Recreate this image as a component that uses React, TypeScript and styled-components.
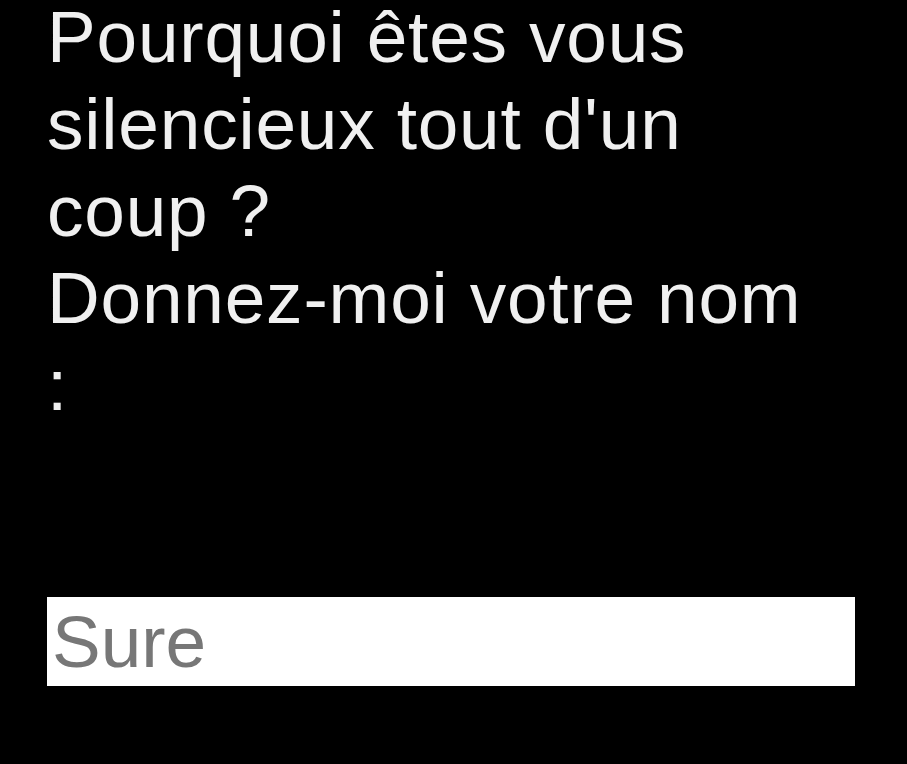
import React from "react";
import styled, { createGlobalStyle } from "styled-components";

const GlobalStyle = createGlobalStyle`
  html, body {
    margin: 0;
    padding: 0;
    background: #000000;
    overflow: hidden;
  }
  body {
    font-family: "Liberation Sans", Arial, sans-serif;
  }
`;

const Screen = styled.main`
  width: 907px;
  height: 764px;
  box-sizing: border-box;
  background: #000000;
  padding: 0 52px 0 47px;
  display: flex;
  flex-direction: column;
  overflow: hidden;
`;

const Message = styled.p`
  margin: -7px 0 0;
  max-width: 770px;
  color: #f0f0f0;
  font-family: "Liberation Sans", Arial, sans-serif;
  font-size: 73px;
  line-height: 87px;
  letter-spacing: 0.8px;
  white-space: pre-line;
`;

const NameInput = styled.input`
  margin-top: 169px;
  width: 808px;
  height: 89px;
  box-sizing: border-box;
  border: none;
  outline: none;
  background: #ffffff;
  padding: 0 0 0 5px;
  color: #777777;
  font-family: "Liberation Sans", Arial, sans-serif;
  font-size: 73px;
  letter-spacing: 0px;
`;

export default function App() {
  return (
    <>
      <GlobalStyle />
      <Screen>
        <Message>{"Pourquoi êtes vous silencieux tout d'un coup ?\nDonnez-moi votre nom :"}</Message>
        <NameInput type="text" defaultValue="Sure" aria-label="Nom" />
      </Screen>
    </>
  );
}
